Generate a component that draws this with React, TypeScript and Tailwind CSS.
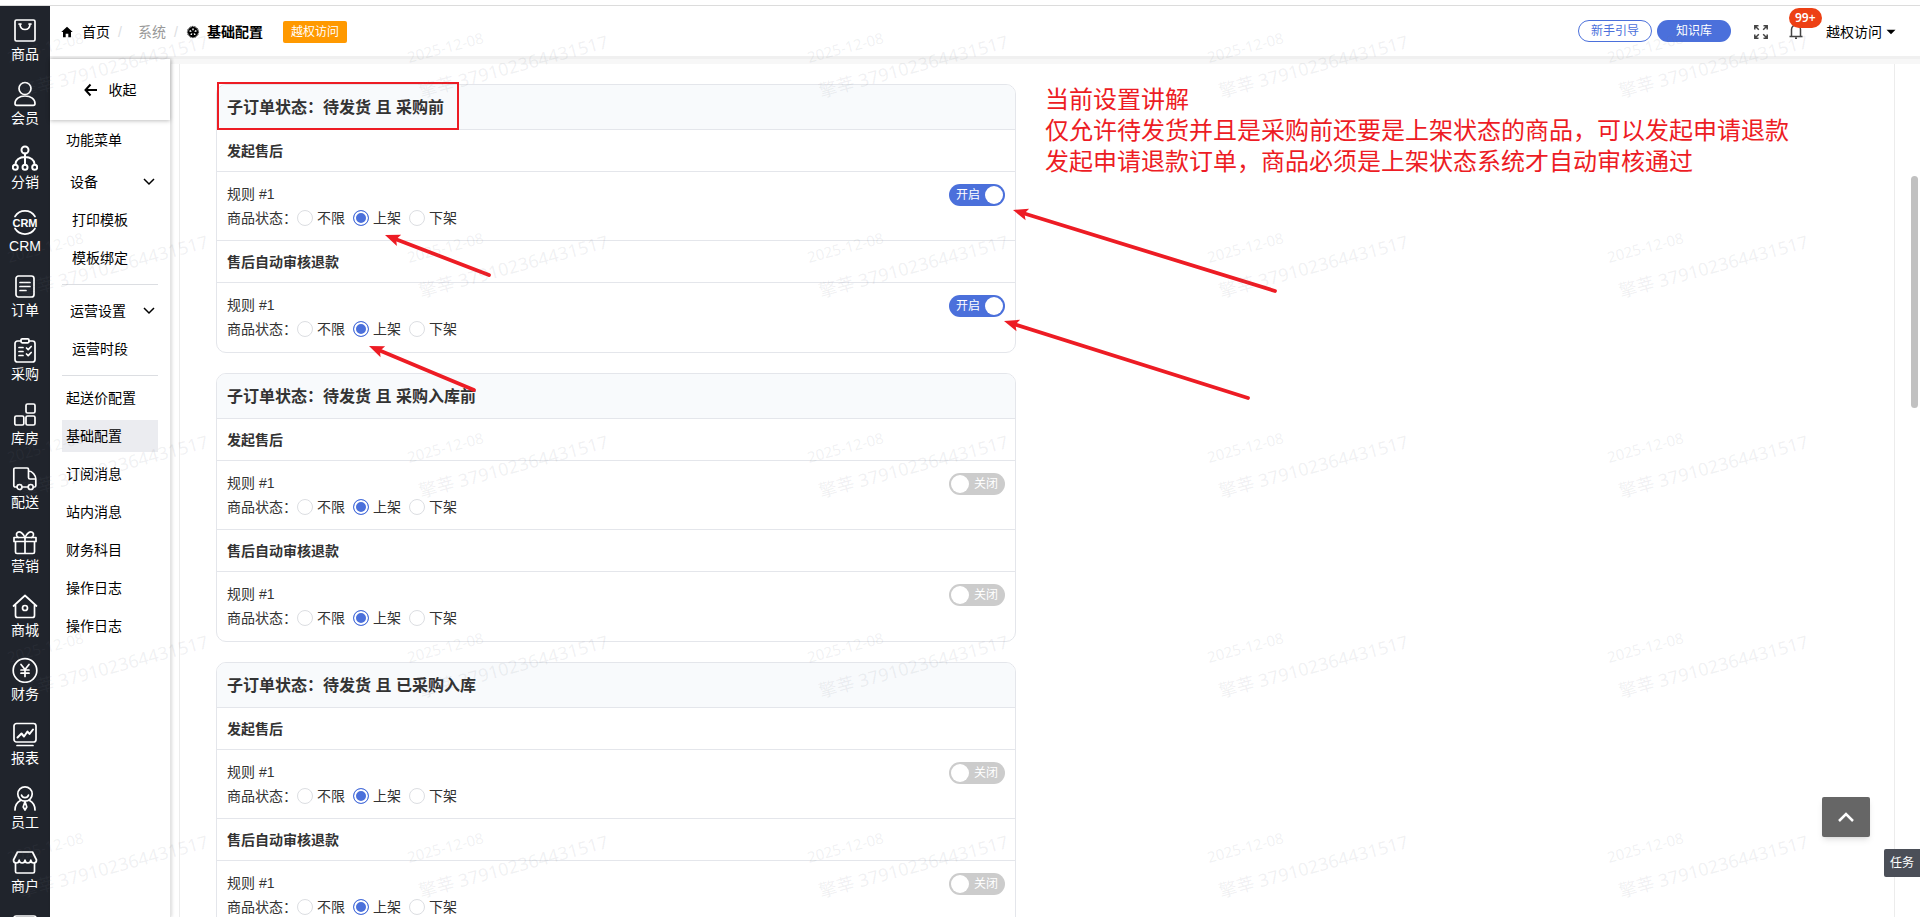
import { useState } from 'react'
import type { ReactNode } from 'react'
import { IoMdHome, IoMdArrowDropdown } from 'react-icons/io'

interface NavItem {
  name: string
  icon: ReactNode
}

interface Rule {
  title: string
  enabled: boolean
}

interface OrderState {
  id: string
  title: string
  rules: Rule[]
}

const navItems: NavItem[] = [
  {
    name: '商品',
    icon: (
      <>
        <rect x="3" y="3" width="20" height="21" rx="1.5" />
        <path d="M8 7.5c.3 3.4 2.4 5 5 5s4.700-1.600 5-5M7 7h2M17 7h2" />
      </>
    ),
  },
  {
    name: '会员',
    icon: (
      <>
        <circle cx="13" cy="7.500" r="6" />
        <path d="M3 22.500c0-4.500 4-7.500 10-7.500s10 3 10 7.500c0 1.300-.6 1.800-1.700 1.800H4.700C3.600 24.300 3 23.800 3 22.500z" />
      </>
    ),
  },
  {
    name: '分销',
    icon: (
      <g strokeWidth="2">
        <circle cx="13" cy="5" r="3.500" />
        <path d="M13 8.500v11M3.500 19c0-4 4-7 9.500-7s9.500 3 9.500 7" />
        <circle cx="3.300" cy="22.300" r="2.500" />
        <circle cx="13" cy="22.300" r="2.500" />
        <circle cx="22.700" cy="22.300" r="2.500" />
      </g>
    ),
  },
  {
    name: 'CRM',
    icon: (
      <>
        <path d="M3 7.500a11.800 11.800 0 0 1 20 0M3 19.500a11.800 11.800 0 0 0 20 0" />
        <text x="13" y="17.500" textAnchor="middle" fontSize="11" fontWeight="700" fill="currentColor" stroke="none">
          CRM
        </text>
      </>
    ),
  },
  {
    name: '订单',
    icon: (
      <>
        <rect x="4" y="3" width="18" height="21" rx="2.500" />
        <path d="M8 9.500h10M8 13.500h10M8 17.500h6" />
      </>
    ),
  },
  {
    name: '采购',
    icon: (
      <>
        <path d="M9 4H5.500A2.500 2.500 0 0 0 3 6.500v16A2.500 2.500 0 0 0 5.500 25h15a2.500 2.500 0 0 0 2.500-2.500v-16A2.500 2.500 0 0 0 20.500 4H17" />
        <rect x="9" y="1.800" width="8" height="4" rx="1.200" />
        <path d="M7 10.500h4M7 14.500h4M7 18.500h4M14.500 11l1.700 1.700 3-3.200M14.500 17l1.700 1.700 3-3.200" />
      </>
    ),
  },
  {
    name: '库房',
    icon: (
      <>
        <rect x="14" y="3" width="9" height="9" rx="1.500" />
        <rect x="2.800" y="15" width="9" height="9" rx="1.500" />
        <rect x="14" y="15" width="9" height="9" rx="1.500" />
      </>
    ),
  },
  {
    name: '配送',
    icon: (
      <>
        <path d="M4.500 22H3.200c-.8 0-1.400-.6-1.400-1.400V4.400C1.800 3.600 2.400 3 3.200 3h12c.8 0 1.300.5 1.300 1.300V6c4 0 7.300 4.500 7.300 8v6.600c0 .8-.5 1.400-1.300 1.400h-.8M10 22h6M16.500 6v6.500c0 1 .5 1.500 1.500 1.500h4.500" />
        <circle cx="7.500" cy="22" r="2.500" />
        <circle cx="18.700" cy="22" r="2.500" />
      </>
    ),
  },
  {
    name: '营销',
    icon: (
      <>
        <path d="M2 8.500h22v4H2zM3.500 12.500V23c0 .8.600 1.500 1.500 1.500h16c.9 0 1.500-.7 1.500-1.500V12.500M13 8.500v16" />
        <path d="M13 8.500C11 4 8 2 5.800 3.200 3.500 4.500 4.500 8 6.500 8.500M13 8.500C15 4 18 2 20.200 3.200c2.300 1.300 1.300 4.800-.7 5.300" />
      </>
    ),
  },
  {
    name: '商城',
    icon: (
      <>
        <path d="M1.500 13 13 2.500 24.500 13M3.500 12v10.500c0 1.200.8 2 2 2h15c1.200 0 2-.8 2-2V12" />
        <circle cx="13" cy="15" r="2.500" />
      </>
    ),
  },
  {
    name: '财务',
    icon: (
      <>
        <circle cx="13" cy="13.500" r="11.800" />
        <path d="m9 7.500 4 5 4-5M13 12.500v7M9 13h8M9 16.200h8" />
      </>
    ),
  },
  {
    name: '报表',
    icon: (
      <>
        <rect x="2" y="2.500" width="22" height="18.500" rx="2.500" />
        <path d="M5 24.500h16" />
        <path d="m5.500 16.500 4-4 2.500 3 3.500-5 2 2.500 3.500-4.500" strokeWidth="2" />
      </>
    ),
  },
  {
    name: '员工',
    icon: (
      <>
        <circle cx="13" cy="9" r="7.200" />
        <path d="M9.500 10c.5 1.700 1.800 2.600 3.500 2.600s3-.9 3.500-2.600M3 25c0-4.500 2-7.700 5.500-9.500M23 25c0-4.500-2-7.700-5.500-9.500" />
        <path d="M13 16.500 11.200 22l1.800 3 1.800-3z" />
      </>
    ),
  },
  {
    name: '商户',
    icon: (
      <>
        <path d="M5.500 3h15l4 8c0 1.800-1 3-2.800 3-1.600 0-2.900-1.200-2.900-3 0 1.800-1.300 3-2.900 3S13 12.800 13 11c0 1.800-1.300 3-2.900 3s-2.900-1.200-2.900-3c0 1.800-1.300 3-2.900 3-1.800 0-2.800-1.200-2.800-3z" />
        <path d="M3.500 14v8.500c0 .9.600 1.500 1.500 1.500h16c.9 0 1.500-.6 1.500-1.500V14" />
      </>
    ),
  },
  {
    name: '',
    icon: <rect x="2" y="3" width="22" height="20" rx="2" />,
  },
]

const orderStates: OrderState[] = [
  {
    id: 'before-purchase',
    title: '子订单状态：待发货 且 采购前',
    rules: [
      { title: '发起售后', enabled: true },
      { title: '售后自动审核退款', enabled: true },
    ],
  },
  {
    id: 'before-stock',
    title: '子订单状态：待发货 且 采购入库前',
    rules: [
      { title: '发起售后', enabled: false },
      { title: '售后自动审核退款', enabled: false },
    ],
  },
  {
    id: 'in-stock',
    title: '子订单状态：待发货 且 已采购入库',
    rules: [
      { title: '发起售后', enabled: false },
      { title: '售后自动审核退款', enabled: false },
    ],
  },
]

const goodsStates = ['不限', '上架', '下架']
const flatMenu = ['起送价配置', '基础配置', '订阅消息', '站内消息', '财务科目', '操作日志', '操作日志']

// tip first, tail second
const arrows = [
  [385, 235, 489, 275],
  [369, 346, 474, 390],
  [1013, 210, 1275, 291],
  [1004, 321, 1248, 398],
]

function NavBar() {
  return (
    <nav className="w-[50px] shrink-0 overflow-hidden bg-[#20242c] text-white">
      {navItems.map((item, i) => (
        <a key={i} href="#" aria-label={item.name || '更多'} className="flex h-16 flex-col items-center gap-px pt-[11px]">
          <svg
            viewBox="0 0 26 26"
            className="size-[26px] shrink-0"
            fill="none"
            stroke="currentColor"
            strokeWidth="1.700"
            strokeLinecap="round"
            strokeLinejoin="round"
          >
            {item.icon}
          </svg>
          {item.name && <span className="text-sm leading-5">{item.name}</span>}
        </a>
      ))}
    </nav>
  )
}

function WheelIcon() {
  return (
    <svg viewBox="-.5 -.5 15 15" className="size-[14px]">
      <circle cx="7" cy="7" r="5.500" fill="#000" />
      <circle cx="7" cy="7" r="6" fill="none" stroke="#000" strokeWidth="1" strokeDasharray="1.200 .685" />
      {[0, 72, 144, 216, 288].map(angle => (
        <path key={angle} d="M7 5.600 5.900 3.700 7 2.900 8.100 3.700z" fill="#fff" transform={`rotate(${angle} 7 7)`} />
      ))}
    </svg>
  )
}

function Header() {
  return (
    <header className="flex h-[53px] shrink-0 items-center border-b-[3px] border-[#f0f0f0] bg-white pr-6 pl-[10px] text-sm text-black">
      <div className="flex items-center pt-[2px]">
        <a href="#" className="flex items-center gap-2">
          <IoMdHome className="size-[14px]" />
          首页
        </a>
        <span className="w-7 pl-2 text-[#dcdee2]">/</span>
        <a href="#" className="text-[#999]">系统</a>
        <span className="w-5 pl-2 text-[#dcdee2]">/</span>
        <span className="flex items-center gap-[7px] font-bold">
          <WheelIcon />
          基础配置
        </span>
        <span className="ml-5 rounded-xs bg-[#ff9900] px-2 text-xs leading-[22px] text-white">越权访问</span>
      </div>

      <div className="ml-auto flex items-center">
        <button className="h-[22px] w-[74px] rounded-full border border-[#4b70db] text-xs text-[#4b70db]">新手引导</button>
        <button className="ml-[5px] h-[22px] w-[74px] rounded-full bg-[#4b70db] text-xs text-white">知识库</button>
        <button aria-label="全屏" className="ml-[23px] pt-[2px]">
          <svg viewBox="0 0 14 14" className="size-[14px]" fill="none" stroke="#444" strokeWidth="1.500">
            <path d="M.8 4.500V.8h3.700M.8.8l4 4M9.500.8h3.700v3.700M13.200.8l-4 4M.8 9.500v3.700h3.700M.8 13.200l4-4M13.200 9.500v3.700H9.500M13.200 13.200l-4-4" />
          </svg>
        </button>
        <button aria-label="通知" className="relative ml-[21px]">
          <svg viewBox="0 0 14 16" className="h-4 w-[14px]" fill="none" stroke="#444" strokeWidth="1.500">
            <path d="M.5 13.500h13M2.500 13.500V6.500a4.500 4.500 0 0 1 9 0v7M6 15.200h2" />
          </svg>
          <span className="absolute -top-[15px] left-0 rounded-full bg-[#ed4014] px-[6px] font-['Noto_Sans'] text-xs leading-5 font-semibold text-white">
            99+
          </span>
        </button>
        <button className="ml-[23px] flex items-center pt-[2px]">
          越权访问
          <IoMdArrowDropdown className="-mr-1 size-[18px]" />
        </button>
      </div>
    </header>
  )
}

function SubMenu() {
  return (
    <aside className="z-10 w-[121px] shrink-0 border-r border-[#e4e4e4] bg-white text-sm text-black shadow-[1px_0_3px_rgba(0,0,0,0.15)]">
      <button className="flex h-[61px] w-full items-center justify-center gap-[11px] shadow-[0_1px_4px_rgba(0,0,0,0.25)]">
        <svg viewBox="0 0 14 14" className="size-[14px]" fill="none" stroke="currentColor" strokeWidth="2">
          <path d="M6.500 1.500 1.500 7l5 5.500M1.500 7H13" />
        </svg>
        收起
      </button>
      <div className="px-3 pt-1">
        <p className="px-1 leading-8">功能菜单</p>
        <Group title="设备" items={['打印模板', '模板绑定']} />
        <Group title="运营设置" items={['运营时段']} />
        <ul className="flex flex-col gap-[6px] pt-[6px]">
          {flatMenu.map((name, i) => (
            <li key={i}>
              <a href="#" className={`block px-1 leading-8 ${i === 1 ? 'bg-[#ebecf0]' : ''}`}>
                {name}
              </a>
            </li>
          ))}
        </ul>
      </div>
    </aside>
  )
}

function Group({ title, items }: { title: string; items: string[] }) {
  return (
    <div className="border-b border-[#dcdee2] py-[10px]">
      <button className="flex w-full items-center justify-between pr-[3px] pl-2 leading-8">
        {title}
        <svg viewBox="0 0 12 12" className="size-3" fill="none" stroke="currentColor" strokeWidth="1.500">
          <path d="m1 3 5 5 5-5" />
        </svg>
      </button>
      {items.map(name => (
        <a key={name} href="#" className="mt-[6px] block pl-[10px] leading-8">
          {name}
        </a>
      ))}
    </div>
  )
}

function RuleRow({ group, rule }: { group: string; rule: Rule }) {
  const [on, setOn] = useState(rule.enabled)
  const [state, setState] = useState('上架')

  return (
    <section className="group">
      <h3 className="border-b border-[#e4e6eb] px-[10px] pt-[11px] pb-[9px] text-sm leading-[21px] font-bold">{rule.title}</h3>
      <div className="flex min-h-[69px] items-start justify-between border-b border-[#e4e6eb] px-[10px] pt-[10px] text-sm leading-6 group-last:border-b-0">
        <div>
          <p>规则 #1</p>
          <div className="flex items-center gap-2">
            <span className="-mr-2">商品状态：</span>
            {goodsStates.map(name => (
              <label key={name} className="flex items-center gap-1">
                <input
                  type="radio"
                  name={`${group}-${rule.title}`}
                  checked={state === name}
                  onChange={() => setState(name)}
                  className="size-4 appearance-none rounded-full border border-[#dcdee2] bg-white checked:border-[#4b70db] checked:bg-[#4b70db] checked:shadow-[inset_0_0_0_2px_white]"
                />
                {name}
              </label>
            ))}
          </div>
        </div>
        <label className={`relative mt-[2px] flex h-[22px] w-14 items-center justify-between rounded-full px-[2px] text-xs text-white ${on ? 'flex-row bg-[#4b70db]' : 'flex-row-reverse bg-[#ccc]'}`}>
          <input
            type="checkbox"
            role="switch"
            className="sr-only"
            checked={on}
            onChange={e => setOn(e.target.checked)}
          />
          <span className="px-[5px] whitespace-nowrap">{on ? '开启' : '关闭'}</span>
          <span className="size-[18px] shrink-0 rounded-full bg-white" />
        </label>
      </div>
    </section>
  )
}

function StateCard({ item }: { item: OrderState }) {
  return (
    <article className="w-[800px] shrink-0 overflow-hidden rounded-[10px] border border-[#e4e6eb] text-[#333]">
      <h2 className="border-b border-[#e4e6eb] bg-[#f8fafc] px-[10px] pt-[11px] pb-[9px] text-base leading-6 font-bold">{item.title}</h2>
      {item.rules.map(rule => (
        <RuleRow key={rule.title} group={item.id} rule={rule} />
      ))}
    </article>
  )
}

function Annotations() {
  return (
    <div className="pointer-events-none absolute inset-0 z-20 overflow-hidden text-[#ed1c24]">
      <div className="absolute top-[82px] left-[217px] h-12 w-[242px] border-2 border-current" />
      <p className="absolute top-[84px] left-[1045px] text-2xl leading-[31px] whitespace-nowrap">
        当前设置讲解
        <br />
        仅允许待发货并且是采购前还要是上架状态的商品，可以发起申请退款
        <br />
        发起申请退款订单，商品必须是上架状态系统才自动审核通过
      </p>
      <svg className="absolute inset-0 size-full">
        {arrows.map(([x1, y1, x2, y2]) => {
          const length = Math.hypot(x2 - x1, y2 - y1)
          const angle = (Math.atan2(y2 - y1, x2 - x1) * 180) / Math.PI
          return (
            <g key={y1} transform={`translate(${x1} ${y1}) rotate(${angle})`} fill="currentColor">
              <path d="M0 0 15-6 12 0 15 6z" />
              <path d={`M11 0H${length}`} stroke="currentColor" strokeWidth="3.800" strokeLinecap="round" />
            </g>
          )
        })}
      </svg>
    </div>
  )
}

function Watermark() {
  const tiles = Array.from({ length: 25 }, (_, i) => [(i % 5) * 400, Math.floor(i / 5) * 200])

  return (
    <svg aria-hidden="true" className="pointer-events-none absolute inset-0 z-30 size-full font-['Noto_Sans','Noto_Sans_CJK_SC',sans-serif]" fill="#6b7280" fillOpacity="0.1">
      {tiles.map(([x, y]) => (
        <g key={`${x}-${y}`} transform={`translate(${x} ${y})`}>
          <text transform="translate(9 63) rotate(-15)" fontSize="15">2025-12-08</text>
          <text transform="translate(21 98) rotate(-15)" fontSize="18">擎莘 379102364431517</text>
        </g>
      ))}
    </svg>
  )
}

export default function App() {
  return (
    <div className="relative flex h-screen flex-col overflow-hidden bg-white font-['Liberation_Sans','Noto_Sans_CJK_SC',sans-serif]">
      <div className="h-[6px] shrink-0 border-b border-[#dcdcdc]" />
      <div className="flex min-h-0 flex-1">
        <NavBar />
        <div className="flex min-w-0 flex-1 flex-col">
          <Header />
          <div className="flex min-h-0 flex-1">
            <SubMenu />
            <div className="flex min-w-0 flex-1 border-t-[5px] border-[#f7f7f7] pl-2">
              <main className="flex flex-1 flex-col gap-5 overflow-hidden border-x border-[#ececec] px-9 pt-5">
                {orderStates.map(item => (
                  <StateCard key={item.id} item={item} />
                ))}
              </main>
              <div className="flex w-[25px] justify-end pt-28 pr-[2px]">
                <div className="h-[232px] w-[7px] rounded-full bg-[#c1c1c1]" />
              </div>
            </div>
          </div>
        </div>
      </div>

      <Annotations />
      <Watermark />

      <button
        aria-label="返回顶部"
        className="absolute right-[50px] bottom-20 z-40 flex h-10 w-12 items-center justify-center rounded-xs bg-[#666] text-white shadow-md"
      >
        <svg viewBox="0 0 16 10" className="h-[10px] w-4" fill="none" stroke="currentColor" strokeWidth="2.500">
          <path d="m1 9 7-7 7 7" />
        </svg>
      </button>
      <button className="absolute right-0 bottom-10 z-40 h-7 w-9 rounded-l-xs bg-[#4b4f58] text-xs text-white">任务</button>
    </div>
  )
}
